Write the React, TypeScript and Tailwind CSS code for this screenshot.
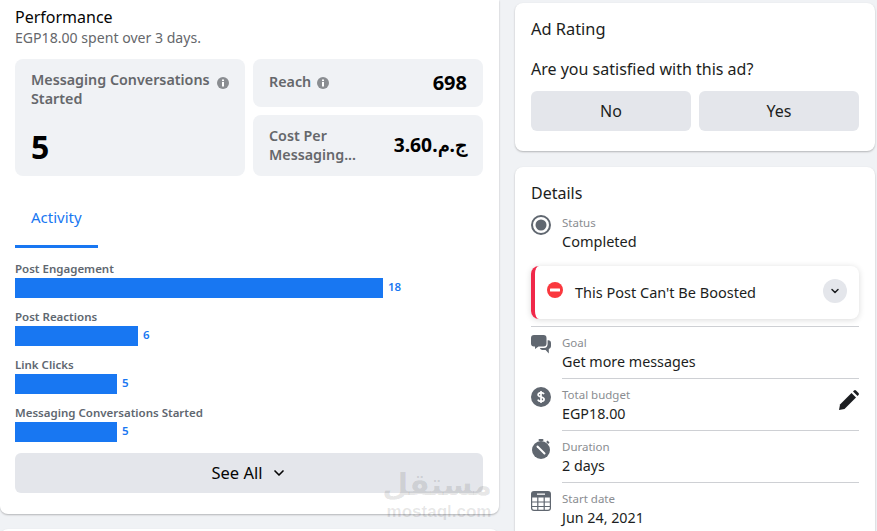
import { ChevronDown } from "lucide-react";

const ACTIVITY = [
  { label: "Post Engagement", width: 368, value: 18 },
  { label: "Post Reactions", width: 123, value: 6 },
  { label: "Link Clicks", width: 102, value: 5 },
  { label: "Messaging Conversations Started", width: 102, value: 5 },
];

function InfoDot({ className }: { className?: string }) {
  return (
    <svg width="12" height="12" viewBox="0 0 12 12" className={className}>
      <circle cx="6" cy="6" r="6" fill="#8a8d91" />
      <rect x="5" y="5" width="2" height="4.500" fill="#fff" />
      <rect x="5" y="2.500" width="2" height="1.600" fill="#fff" />
    </svg>
  );
}

function StatusIcon() {
  return (
    <svg width="20" height="20" viewBox="0 0 20 20">
      <circle cx="10" cy="10" r="9" fill="none" stroke="#606770" strokeWidth="2" />
      <circle cx="10" cy="10" r="5.500" fill="#606770" />
    </svg>
  );
}

function GoalIcon() {
  return (
    <svg width="20" height="20" viewBox="0 0 20 20" fill="#606770">
      <path d="M3 0h9.500a3 3 0 0 1 3 3v5.500a3 3 0 0 1-3 3H7.500L4 14v-2.500H3a3 3 0 0 1-3-3V3a3 3 0 0 1 3-3z" />
      <path d="M16.600 5.200A3 3 0 0 1 20 8v3.200a3 3 0 0 1-2.200 2.800v4.500L14.600 15H11a3 3 0 0 1-2.200-2h4.200a4 4 0 0 0 3.600-3.800z" />
    </svg>
  );
}

function BudgetIcon() {
  return (
    <svg width="20" height="20" viewBox="0 0 20 20">
      <circle cx="10" cy="10" r="10" fill="#606770" />
      <path d="M13 7.200c-.5-1-1.600-1.500-3-1.500-1.600 0-2.900.8-2.900 2.100 0 2.900 6 1.500 6 4.400 0 1.300-1.300 2.100-3.100 2.100-1.500 0-2.700-.6-3.200-1.700M10 4v12" fill="none" stroke="#fff" strokeWidth="1.700" />
    </svg>
  );
}

function DurationIcon() {
  return (
    <svg width="20" height="20" viewBox="0 0 20 20" fill="#606770">
      <circle cx="10" cy="11" r="9" />
      <rect x="7.500" y="0" width="5" height="2" rx="1" />
      <path d="M16.500 1.600l2 2-1.300 1.300-2-2z" />
      <path d="M6.500 7.500l7 7" stroke="#fff" strokeWidth="2" strokeLinecap="round" />
    </svg>
  );
}

function CalendarIcon() {
  return (
    <svg width="20" height="20" viewBox="0 0 20 20">
      <path d="M3 0h14a3 3 0 0 1 3 3v3.500H0V3a3 3 0 0 1 3-3z" fill="#606770" />
      <rect x="6" y="2.500" width="8" height="1.300" fill="#fff" />
      <path d="M.6 6v11A2.400 2.400 0 0 0 3 19.400h14a2.400 2.400 0 0 0 2.400-2.400V6M.6 11h18.800M.6 15.500h18.800M6.800 6v13.400M13.200 6v13.400" fill="none" stroke="#606770" strokeWidth="1.200" />
    </svg>
  );
}

function PencilIcon() {
  return (
    <svg width="20" height="20" viewBox="0 0 20 20" fill="#1c1e21">
      <path d="M0 20l1-5.500L12.500 3l4.500 4.500L5.500 19z" />
      <path d="M14 1.500l1-1a1.500 1.500 0 0 1 2 0l2.500 2.500a1.500 1.500 0 0 1 0 2l-1 1z" />
    </svg>
  );
}

function DetailRow({ icon, label, value, action }: { icon: React.ReactNode; label: string; value: string; action?: React.ReactNode }) {
  return (
    <div className="flex">
      <div className="w-[31px] shrink-0 pt-[8px]">{icon}</div>
      <div className="flex-1 border-b border-[#ced0d4] h-[52px] pt-[7px] flex justify-between">
        <div>
          <div className="text-[11.500px] leading-[18px] text-[#8a8d91]">{label}</div>
          <div className="text-[14.300px] leading-[20px] text-[#1c1e21]">{value}</div>
        </div>
        {action && <div className="pt-[4px]">{action}</div>}
      </div>
    </div>
  );
}

export default function App() {
  return (
    <div className="relative h-[531px] w-[877px] overflow-hidden bg-[#f0f2f5] flex gap-[16px] font-['Noto_Sans','Open_Sans',sans-serif] text-[#1c1e21]">
      {/* COLUMNA IZQUIERDA */}
      <div className="w-[499px] shrink-0">
        <section className="h-[514px] bg-white rounded-b-lg shadow-[0_1px_2px_rgba(0,0,0,0.25)] px-[15px] pt-[7px]">
          <h2 className="text-[16px] leading-[20px] text-[#050505]">Performance</h2>
          <p className="text-[14.100px] leading-[21px] text-[#65676b]">EGP18.00 spent over 3 days.</p>

          <div className="mt-[11px] grid grid-cols-2 grid-rows-[48px_61px] gap-[8px] w-[468px]">
            <div className="row-span-2 bg-[#f0f2f5] rounded-lg px-[16px] pt-[11px] flex flex-col justify-between pb-[8px]">
              <div className="flex items-center gap-[6px]">
                <span className="text-[14.300px] leading-[19px] font-semibold text-[#65676b]">Messaging Conversations Started</span>
                <InfoDot className="shrink-0 mb-[12px]" />
              </div>
              <div className="text-[32px] leading-[42px] font-bold text-black">5</div>
            </div>
            <div className="bg-[#f0f2f5] rounded-lg px-[16px] flex items-center justify-between">
              <div className="flex items-center gap-[6px] mb-[2px]">
                <span className="text-[14.300px] font-semibold text-[#65676b]">Reach</span>
                <InfoDot className="mt-[2px]" />
              </div>
              <span className="text-[20px] font-bold text-black">698</span>
            </div>
            <div className="bg-[#f0f2f5] rounded-lg px-[16px] flex items-center justify-between">
              <span className="text-[14.300px] leading-[19px] font-semibold text-[#65676b] w-[100px] mb-[2px]">Cost Per Messaging...</span>
              <span dir="rtl" className="text-[19.300px] font-bold text-black">ج.م.3.60</span>
            </div>
          </div>

          {/* PESTAÑA */}
          <div className="mt-[19px] w-[83px] h-[53px] border-b-[3px] border-[#1877f2] pl-[16px] pt-[12px] text-[15px] leading-[20px] text-[#1877f2]">
            Activity
          </div>

          {/* BARRAS */}
          <div className="mt-[13px] flex flex-col gap-[4px]">
            {ACTIVITY.map((row) => (
              <div key={row.label} className="h-[44px]">
                <div className="text-[11.500px] leading-[16px] font-semibold text-[#606770]">{row.label}</div>
                <div className="mt-[1px] flex items-center">
                  <div className="h-[20px] bg-[#1877f2]" style={{ width: row.width }} />
                  <span className="ml-[5px] mb-[2px] text-[11.500px] font-semibold text-[#1877f2]">{row.value}</span>
                </div>
              </div>
            ))}
          </div>

          <button className="mt-[4px] w-[468px] h-[40px] bg-[#e4e6eb] rounded-md flex items-center justify-center gap-[8px] text-[16.500px] text-[#050505]">
            See All
            <ChevronDown size={16} strokeWidth={2.500} />
          </button>
        </section>
        <div className="mt-[15px] h-[20px] bg-white rounded-t-lg shadow-[0_1px_2px_rgba(0,0,0,0.2)]" />
      </div>

      {/* COLUMNA DERECHA */}
      <div className="w-[360px] shrink-0 pt-[3px] flex flex-col gap-[16px]">
        <section className="h-[148px] shrink-0 bg-white rounded-lg shadow-[0_1px_2px_rgba(0,0,0,0.25)] px-[16px] pt-[16px]">
          <h2 className="text-[16.400px] leading-[20px]">Ad Rating</h2>
          <p className="mt-[20px] text-[16px] leading-[20px] text-[#1c1e21]">Are you satisfied with this ad?</p>
          <div className="mt-[12px] flex gap-[8px] w-[328px]">
            <button className="flex-1 h-[40px] bg-[#e4e6eb] rounded-md text-[16px]">No</button>
            <button className="flex-1 h-[40px] bg-[#e4e6eb] rounded-md text-[16px]">Yes</button>
          </div>
        </section>

        <section className="h-[400px] shrink-0 bg-white rounded-t-lg shadow-[0_1px_2px_rgba(0,0,0,0.25)] px-[16px] pt-[16px] w-[360px]">
          <h2 className="text-[16px] leading-[20px]">Details</h2>
          <div className="mt-[12px] flex">
            <div className="w-[31px] shrink-0"><StatusIcon /></div>
            <div>
              <div className="text-[11.500px] leading-[16px] text-[#8a8d91]">Status</div>
              <div className="text-[14.500px] leading-[20px]">Completed</div>
            </div>
          </div>

          <div className="mt-[15px] h-[53px] rounded-lg border-l-[4px] border-[#f02849] shadow-[0_1px_6px_rgba(0,0,0,0.15)] flex items-center pl-[12px] pr-[12px]">
            <svg width="16" height="16" viewBox="0 0 16 16" className="mb-[6px] shrink-0">
              <circle cx="8" cy="8" r="8" fill="#fa383e" />
              <rect x="3" y="6.500" width="10" height="3" rx="0.500" fill="#fff" />
            </svg>
            <span className="ml-[12px] flex-1 text-[14.500px] text-[#1c1e21]">This Post Can't Be Boosted</span>
            <span className="w-[24px] h-[24px] rounded-full bg-[#e4e6eb] flex items-center justify-center mb-[3px]">
              <ChevronDown size={12} strokeWidth={3} />
            </span>
          </div>

          <div className="mt-[7px] border-t border-[#ced0d4]">
            <DetailRow icon={<GoalIcon />} label="Goal" value="Get more messages" />
            <DetailRow icon={<BudgetIcon />} label="Total budget" value="EGP18.00" action={<PencilIcon />} />
            <DetailRow icon={<DurationIcon />} label="Duration" value="2 days" />
            <DetailRow icon={<CalendarIcon />} label="Start date" value="Jun 24, 2021" />
          </div>
        </section>
      </div>

      {/* MARCA DE AGUA */}
      <div className="absolute left-[386px] top-[467px] w-[106px] text-center text-black/10 pointer-events-none">
        <div dir="rtl" className="text-[30px] leading-[36px] font-bold font-['DejaVu_Sans',sans-serif]">مستقل</div>
        <div className="text-[17px] leading-[18px] font-bold font-['Liberation_Sans',sans-serif]">mostaql.com</div>
      </div>
    </div>
  );
}
